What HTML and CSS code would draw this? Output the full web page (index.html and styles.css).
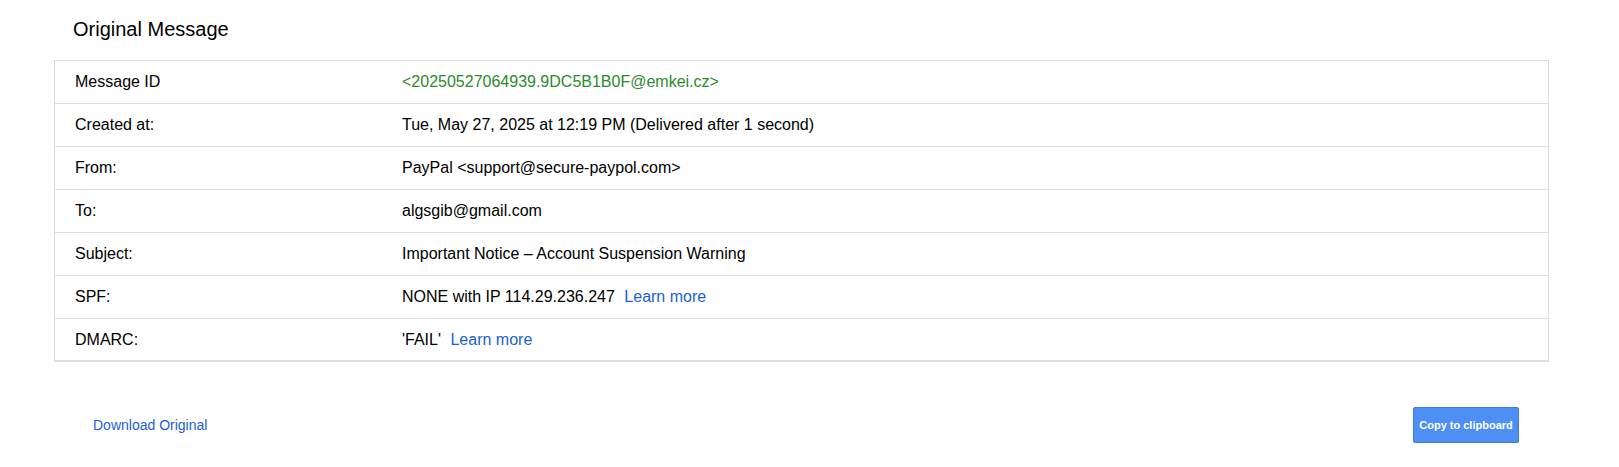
FILE: index.html
```html
<!DOCTYPE html>
<html>
<head>
<meta charset="utf-8">
<link rel="stylesheet" href="styles.css">
</head>
<body>
<div class="page">
  <h2 class="title">Original Message</h2>
  <div class="table">
    <div class="row"><div class="label">Message ID</div><div class="value green">&lt;20250527064939.9DC5B1B0F@emkei.cz&gt;</div></div>
    <div class="row"><div class="label">Created at:</div><div class="value">Tue, May 27, 2025 at 12:19 PM (Delivered after 1 second)</div></div>
    <div class="row"><div class="label">From:</div><div class="value">PayPal &lt;support@secure-paypol.com&gt;</div></div>
    <div class="row"><div class="label">To:</div><div class="value">algsgib@gmail.com</div></div>
    <div class="row"><div class="label">Subject:</div><div class="value">Important Notice – Account Suspension Warning</div></div>
    <div class="row"><div class="label">SPF:</div><div class="value">NONE with IP 114.29.236.247 <a class="link" href="#">Learn more</a></div></div>
    <div class="row"><div class="label">DMARC:</div><div class="value">'FAIL' <a class="link" href="#">Learn more</a></div></div>
  </div>
  <div class="footer">
    <a class="download" href="#">Download Original</a>
    <button class="copy">Copy to clipboard</button>
  </div>
</div>
</body>
</html>
```

FILE: styles.css
```css
html, body {
  margin: 0;
  padding: 0;
  background: #fff;
}
body {
  font-family: "Liberation Sans", Arial, sans-serif;
  color: #000;
}
.page {
  padding: 0 70px 0 54px;
}
.title {
  margin: 0;
  padding: 17px 0 0 19px;
  height: 43px;
  box-sizing: border-box;
  font-size: 20px;
  font-weight: normal;
  line-height: 24px;
}
.table {
  margin-top: 17px;
  border: 1px solid #dddddd;
  border-bottom: none;
  width: 1495px;
  box-sizing: border-box;
}
.row {
  display: flex;
  align-items: center;
  height: 43px;
  border-bottom: 1px solid #dddddd;
  box-sizing: border-box;
  font-size: 16px;
}
.row:last-child {
  border-bottom: 2px solid #dddddd;
}
.label {
  width: 327px;
  padding-left: 20px;
  flex: none;
}
.value {
  flex: 1;
  white-space: pre;
}
.green {
  color: #2b8a2b;
}
.link {
  color: #1a5fd6;
  text-decoration: none;
  margin-left: 5px;
}
.footer {
  display: flex;
  justify-content: space-between;
  align-items: center;
  margin-top: 45px;
  padding: 0 30px 0 39px;
}
.download {
  color: #1a5fd6;
  text-decoration: none;
  font-size: 14px;
}
.copy {
  width: 106px;
  height: 36px;
  background: #4d8ff5;
  border: 1px solid #3b7ae6;
  border-radius: 2px;
  color: #fff;
  font-family: "Liberation Sans", Arial, sans-serif;
  font-size: 11px;
  font-weight: bold;
  padding: 0;
}
```
